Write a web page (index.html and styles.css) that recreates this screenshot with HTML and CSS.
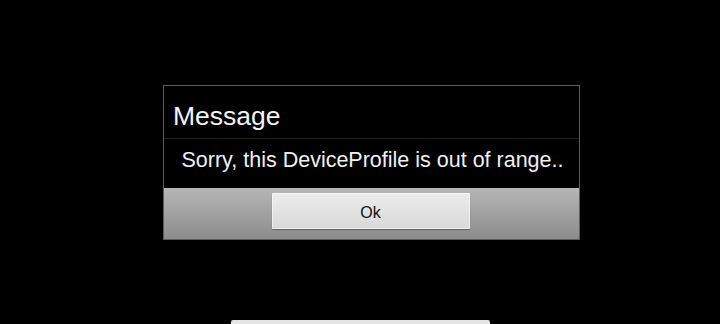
FILE: index.html
```html
<!DOCTYPE html>
<html>
<head>
<meta charset="utf-8">
<link rel="stylesheet" href="styles.css">
</head>
<body>
<div class="screen">
  <div class="dialog">
    <div class="title">Message</div>
    <div class="message">Sorry, this DeviceProfile is out of range..</div>
    <div class="buttons">
      <button class="ok">Ok</button>
    </div>
  </div>
  <div class="home-indicator"></div>
</div>
</body>
</html>
```
FILE: styles.css
```css
html, body {
  margin: 0;
  padding: 0;
  background: #000;
}
.screen {
  width: 720px;
  height: 324px;
  display: flex;
  flex-direction: column;
  padding-top: 85px;
  box-sizing: border-box;
  font-family: "Liberation Sans", Arial, sans-serif;
}
.dialog {
  margin-left: 163px;
  width: 417px;
  box-sizing: border-box;
  border: 1px solid #5c5c5c;
  background: #000;
  display: flex;
  flex-direction: column;
}
.title {
  height: 53px;
  box-sizing: border-box;
  border-bottom: 1px solid #1e1e1e;
  color: #f4f4f4;
  font-size: 26.5px;
  line-height: 60px;
  padding-left: 9px;
  overflow: hidden;
}
.message {
  height: 49px;
  color: #f0f0f0;
  font-size: 21.5px;
  line-height: 43px;
  text-align: center;
  padding-left: 2px;
}
.buttons {
  height: 51px;
  background: linear-gradient(#b6b6b6, #8c8c8c);
  display: flex;
  justify-content: center;
  align-items: flex-start;
  padding-top: 5px;
  box-sizing: border-box;
}
.ok {
  width: 198px;
  height: 36px;
  margin-right: 2px;
  border: none;
  border-radius: 1px;
  background: linear-gradient(#ececec, #d9d9d9);
  box-shadow: 0 1px 1px rgba(0,0,0,0.35), inset 0 0 0 1px rgba(255,255,255,0.5);
  font-family: "Liberation Sans", Arial, sans-serif;
  font-size: 16px;
  color: #111;
  padding: 3px 0 0 0;
}
.home-indicator {
  margin-top: auto;
  margin-bottom: 0;
  margin-left: 231px;
  width: 259px;
  height: 4px;
  border-radius: 2px 2px 0 0;
  background: #e4e4e4;
}
```
